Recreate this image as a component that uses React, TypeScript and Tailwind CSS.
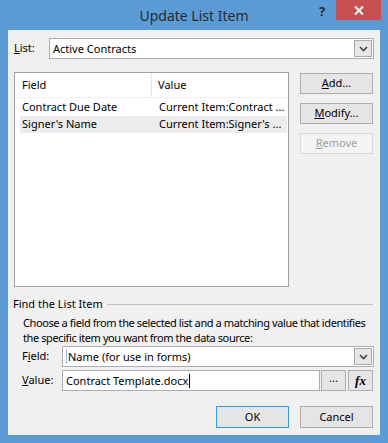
// Update List Item — diálogo estilo Windows 8

const font = { fontFamily: '"Segoe UI", "Noto Sans", sans-serif' };

function Chevron() {
  return (
    <svg width="9" height="6" viewBox="0 0 9 6" className="block">
      <path d="M1 1 L4.5 4.5 L8 1" fill="none" stroke="#444" strokeWidth="1.6" />
    </svg>
  );
}

function Combo({ text, className, caret }: { text: string; className: string; caret?: boolean }) {
  return (
    <div className={`flex h-[21px] items-center border border-[#abadb3] bg-white pl-[3px] pr-[1px] ${className}`}>
      {caret && <span className="mr-[1px] h-[15px] w-px bg-[#9cc3ef]" />}
      <span className="flex-1 whitespace-nowrap leading-[15px]">{text}</span>
      <span className="flex h-[17px] w-[18px] items-center justify-center border border-[#acacac] bg-[#e6e6e6]">
        <Chevron />
      </span>
    </div>
  );
}

function Btn({
  children,
  className = '',
  disabled,
  primary,
}: {
  children: React.ReactNode;
  className?: string;
  disabled?: boolean;
  primary?: boolean;
}) {
  return (
    <div
      className={`flex items-center justify-center border ${
        disabled
          ? 'border-[#d9d9d9] bg-[#f4f4f4] text-[#a0a0a0]'
          : primary
            ? 'border-[#3399ff] bg-[#e5e5e5] text-black'
            : 'border-[#adadad] bg-[#e5e5e5] text-black'
      } ${className}`}
    >
      {children}
    </div>
  );
}

export default function App() {
  return (
    <div style={font} className="flex h-[443px] w-[388px] flex-col bg-[#5b9bd5] text-[11px] text-black">
      {/* barra de título */}
      <div className="relative flex h-[30px] items-center justify-center">
        <span className="text-[14px] text-[#2b2b2b]">Update List Item</span>
        <span className="absolute left-[319px] top-[2px] text-[13px] font-bold text-[#2b2b2b]">?</span>
        <div className="absolute left-[336px] top-0 flex h-[20px] w-[45px] items-center justify-center bg-[#c75050]">
          <svg width="10" height="9" viewBox="0 0 10 9">
            <path d="M1 0.5 L9 8.5 M9 0.5 L1 8.5" stroke="#fff" strokeWidth="2" />
          </svg>
        </div>
      </div>

      <div className="mx-[8px] mb-[8px] flex flex-1 flex-col bg-[#f0f0f0] px-[6px] pt-[8px]">
        {/* List */}
        <div className="flex items-center">
          <span className="w-[35px]">
            <span className="underline">L</span>ist:
          </span>
          <Combo text="Active Contracts" className="flex-1" />
        </div>

        {/* tabela + botões */}
        <div className="mt-[13px] flex">
          <div className="h-[215px] w-[275px] border border-[#a0a0a0] bg-white">
            <div className="flex h-[25px] items-center border-b border-[#f0f0f0] whitespace-nowrap">
              <span className="w-[137px] border-r border-[#e5e5e5] pl-[7px] leading-[24px]">Field</span>
              <span className="pl-[6px]">Value</span>
            </div>
            <div className="mt-[1px] flex h-[17px] items-center whitespace-nowrap pl-[7px]">
              <span className="w-[131px]">Contract Due Date</span>
              <span className="pl-[6px]">Current Item:Contract ...</span>
            </div>
            <div className="ml-[5px] mr-px flex h-[17px] items-center whitespace-nowrap bg-[#ececec] pl-[2px]">
              <span className="w-[131px]">Signer's Name</span>
              <span className="pl-[6px]">Current Item:Signer's ...</span>
            </div>
          </div>
          <div className="ml-auto mr-[1px] mt-[1px] flex w-[73px] flex-col gap-[9px]">
            <Btn className="h-[21px]">
              <span>
                <span className="underline">A</span>dd...
              </span>
            </Btn>
            <Btn className="h-[21px]">
              <span>
                <span className="underline">M</span>odify...
              </span>
            </Btn>
            <Btn className="h-[21px]" disabled>
              <span>
                <span className="underline">R</span>emove
              </span>
            </Btn>
          </div>
        </div>

        {/* Find the List Item */}
        <div className="mt-[9px] flex items-center">
          <span className="-ml-px leading-[16px]">Find the List Item</span>
          <span className="ml-[4px] mr-px h-px flex-1 bg-[#c0c0c0]" />
        </div>
        <p className="ml-[9px] mt-[3px] whitespace-nowrap leading-[15px] tracking-[-0.4px]">
          Choose a field from the selected list and a matching value that identifies
          <br />
          the specific item you want from the data source:
        </p>

        <div className="mt-[1px] flex items-center">
          <span className="w-[48px] pl-[8px]">
            F<span className="underline">i</span>eld:
          </span>
          <Combo text="Name (for use in forms)" className="flex-1" caret />
        </div>
        <div className="mt-[3px] flex h-[21px] items-center">
          <span className="w-[48px] pl-[8px]">
            <span className="underline">V</span>alue:
          </span>
          <div className="flex h-[21px] w-[258px] items-center border border-[#abadb3] bg-white pl-[3px]">
            <span className="leading-[15px]">Contract Template.docx</span>
            <span className="ml-px h-[14px] w-px bg-black" />
          </div>
          <Btn className="ml-[1px] h-[21px] w-[25px]">
            <span className="-mt-[4px]">...</span>
          </Btn>
          <Btn className="ml-[2px] h-[21px] w-[25px]">
            <span
              className="text-[13px] font-bold italic"
              style={{ fontFamily: '"Liberation Serif", serif' }}
            >
              fx
            </span>
          </Btn>
        </div>

        {/* OK / Cancel */}
        <div className="mt-[15px] flex justify-end gap-[11px] pr-[1px]">
          <Btn className="h-[22px] w-[73px]" primary>
            OK
          </Btn>
          <Btn className="h-[22px] w-[73px]">Cancel</Btn>
        </div>
      </div>
    </div>
  );
}
